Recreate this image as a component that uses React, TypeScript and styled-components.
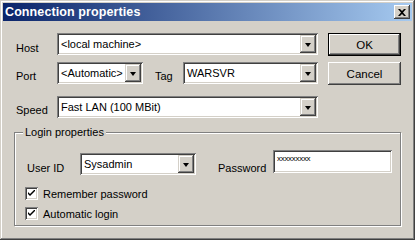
import styled, { createGlobalStyle } from "styled-components";

const face = "#D4D0C8";
const shadow = "#808080";
const dark = "#404040";

const GlobalStyle = createGlobalStyle`
  html, body {
    margin: 0;
    padding: 0;
    background: ${face};
  }
  body {
    font-family: "Liberation Sans", Arial, sans-serif;
    font-size: 11px;
    color: #000;
  }
  * {
    box-sizing: border-box;
  }
`;

const Window = styled.div`
  width: 415px;
  height: 240px;
  padding: 3px;
  background: ${face};
  box-shadow: inset -1px -1px 0 ${dark}, inset 1px 1px 0 ${face},
    inset -2px -2px 0 ${shadow}, inset 2px 2px 0 #fff;
  display: flex;
  flex-direction: column;
`;

const TitleBar = styled.div`
  height: 18px;
  display: flex;
  align-items: center;
  justify-content: space-between;
  padding: 0 2px 0 2px;
  background: linear-gradient(to right, #0a246a, #a6caf0);
`;

const TitleText = styled.span`
  color: #fff;
  font-weight: bold;
  font-size: 12.5px;
  letter-spacing: 0.1px;
`;

const CloseButton = styled.div`
  width: 16px;
  height: 14px;
  background: ${face};
  box-shadow: inset -1px -1px 0 ${dark}, inset 1px 1px 0 #fff,
    inset -2px -2px 0 ${shadow};
  display: flex;
  align-items: center;
  justify-content: center;
`;

const Body = styled.div`
  padding: 12px 11px 0 11px;
  display: flex;
  flex-direction: column;
`;

const Top = styled.div`
  display: flex;
`;

const FormCol = styled.div`
  width: 304px;
  padding-left: 2px;
  display: flex;
  flex-direction: column;
`;

const Row = styled.div<{ $gap?: number }>`
  display: flex;
  align-items: center;
  margin-top: ${(p) => p.$gap ?? 0}px;
`;

const Label = styled.span<{ $w: number; $shift?: number; $ml?: number }>`
  width: ${(p) => p.$w}px;
  margin-left: ${(p) => p.$ml ?? 0}px;
  padding-top: ${(p) => p.$shift ?? 6}px;
  white-space: nowrap;
`;

const Sunken = styled.div<{ $w: number; $h?: number; $top?: number }>`
  width: ${(p) => p.$w}px;
  height: ${(p) => p.$h ?? 22}px;
  margin-top: ${(p) => p.$top ?? 0}px;
  background: #fff;
  box-shadow: inset 1px 1px 0 ${shadow}, inset -1px -1px 0 #fff,
    inset 2px 2px 0 ${dark}, inset -2px -2px 0 ${face};
  padding: 2px;
  display: flex;
  align-items: center;
`;

const FieldText = styled.span`
  flex: 1;
  padding-left: 2px;
  white-space: nowrap;
  overflow: hidden;
`;

const DropButton = styled.div`
  width: 16px;
  height: 18px;
  background: ${face};
  box-shadow: inset -1px -1px 0 ${dark}, inset 1px 1px 0 ${face},
    inset -2px -2px 0 ${shadow}, inset 2px 2px 0 #fff;
  display: flex;
  align-items: center;
  justify-content: center;

  &::after {
    content: "";
    border-left: 3.5px solid transparent;
    border-right: 3.5px solid transparent;
    border-top: 4px solid #000;
    margin-top: 1px;
  }
`;

const ButtonCol = styled.div`
  margin-left: 10px;
  display: flex;
  flex-direction: column;
  gap: 6px;
`;

const PushButton = styled.div<{ $default?: boolean }>`
  width: 73px;
  height: 23px;
  background: ${face};
  display: flex;
  align-items: center;
  justify-content: center;
  font-size: 11.5px;
  box-shadow: ${(p) =>
    p.$default
      ? `inset 0 0 0 1px #000, inset -2px -2px 0 ${dark}, inset 2px 2px 0 #fff, inset -3px -3px 0 ${shadow}`
      : `inset -1px -1px 0 ${dark}, inset 1px 1px 0 #fff, inset -2px -2px 0 ${shadow}`};
`;

const GroupBox = styled.div`
  position: relative;
  margin-top: 14px;
  height: 94px;
  border: 1px solid ${shadow};
  box-shadow: 1px 1px 0 #fff, inset 1px 1px 0 #fff;
  padding: 17px 0 0 12px;
`;

const GroupCaption = styled.span`
  position: absolute;
  top: -7px;
  left: 8px;
  padding: 0 2px;
  background: ${face};
`;

const LoginRow = styled.div`
  display: flex;
  align-items: flex-start;
`;

const CheckRow = styled.div<{ $gap: number }>`
  display: flex;
  align-items: center;
  gap: 5px;
  margin-top: ${(p) => p.$gap}px;
  margin-left: -2px;
  height: 13px;
`;

const CheckBox = styled.div`
  width: 13px;
  height: 13px;
  background: #fff;
  box-shadow: inset 1px 1px 0 ${shadow}, inset -1px -1px 0 #fff,
    inset 2px 2px 0 ${dark}, inset -2px -2px 0 ${face};
  display: flex;
  align-items: center;
  justify-content: center;
`;

const Dots = styled.span`
  font-size: 8px;
  letter-spacing: -0.3px;
  padding-left: 2px;
  margin-top: -7px;
`;

const Combo = ({ w, text, top }: { w: number; text: string; top?: number }) => (
  <Sunken $w={w} $top={top}>
    <FieldText>{text}</FieldText>
    <DropButton />
  </Sunken>
);

const Check = () => (
  <CheckBox>
    <svg width="7" height="7" viewBox="0 0 7 7">
      <path d="M0 2 L0 4 L2 6 L7 1 L7 -1 L2 4 Z" fill="#000" />
    </svg>
  </CheckBox>
);

export default function App() {
  return (
    <>
      <GlobalStyle />
      <Window>
        <TitleBar>
          <TitleText>Connection properties</TitleText>
          <CloseButton>
            <svg width="8" height="7" viewBox="0 0 8 7">
              <path
                d="M0 0h2l2 2 2-2h2L5 3.5 8 7H6L4 5 2 7H0l3-3.5z"
                fill="#000"
              />
            </svg>
          </CloseButton>
        </TitleBar>
        <Body>
          <Top>
            <FormCol>
              <Row>
                <Label $w={41} $shift={8}>Host</Label>
                <Combo w={261} text="<local machine>" />
              </Row>
              <Row $gap={7}>
                <Label $w={41}>Port</Label>
                <Combo w={86} text="<Automatic>" />
                <Label $w={28} $ml={12}>Tag</Label>
                <Combo w={135} text="WARSVR" />
              </Row>
              <Row $gap={12}>
                <Label $w={41}>Speed</Label>
                <Combo w={261} text="Fast LAN (100 MBit)" />
              </Row>
            </FormCol>
            <ButtonCol>
              <PushButton $default>OK</PushButton>
              <PushButton>Cancel</PushButton>
            </ButtonCol>
          </Top>
          <GroupBox>
            <GroupCaption>Login properties</GroupCaption>
            <LoginRow>
              <Label $w={53} $shift={12}>User ID</Label>
              <Combo w={116} text="Sysadmin" top={3} />
              <Label $w={55} $ml={22} $shift={12}>Password</Label>
              <Sunken $w={119} $h={23}>
                <Dots>xxxxxxxxx</Dots>
              </Sunken>
            </LoginRow>
            <CheckRow $gap={12}>
              <Check />
              <span>Remember password</span>
            </CheckRow>
            <CheckRow $gap={7}>
              <Check />
              <span>Automatic login</span>
            </CheckRow>
          </GroupBox>
        </Body>
      </Window>
    </>
  );
}
